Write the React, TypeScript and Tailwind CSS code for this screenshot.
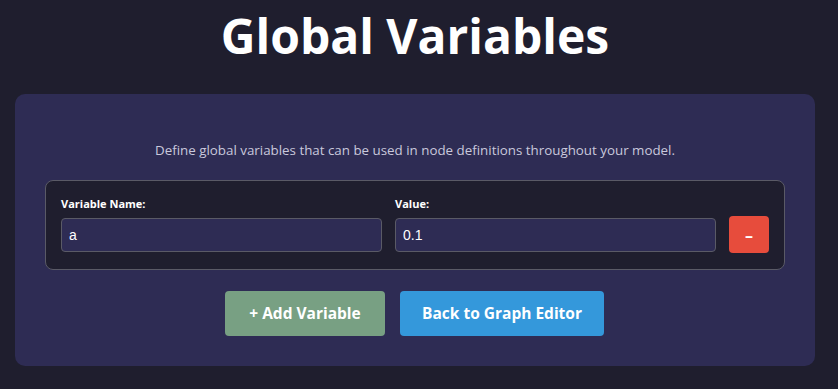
export default function App() {
  return (
    <div className="min-h-[389px] bg-[#1f1e2e] px-[15px] font-['Open_Sans',sans-serif]">
      <div className="w-[800px]">
        <h1 className="pt-[6px] text-center text-[48px] font-bold leading-[60px] text-white">Global Variables</h1>
        <div className="mt-[28px] rounded-[10px] bg-[#2e2c54] px-[30px] pb-[30px] pt-[30px]">
          <p className="mt-[17px] text-center text-[13.35px] leading-[18px] text-[#c9c8dc]">
            Define global variables that can be used in node definitions throughout your model.
          </p>
          <div className="mt-[21px] flex items-end gap-[13px] rounded-[8px] border border-[#5a5a66] bg-[#1f1e2e] px-[15px] pb-[17px] pt-[15px]">
            <label className="flex w-[321px] flex-col">
              <span className="mb-[6px] text-[11px] font-bold leading-[16px] text-white">Variable Name:</span>
              <input
                defaultValue="a"
                className="h-[34px] rounded-[4px] border border-[#5a5a66] bg-[#2e2c54] px-[7px] font-['Liberation_Sans',sans-serif] text-[14px] text-white outline-none"
              />
            </label>
            <label className="flex w-[321px] flex-col">
              <span className="mb-[6px] text-[11px] font-bold leading-[16px] text-white">Value:</span>
              <input
                defaultValue="0.1"
                className="h-[34px] rounded-[4px] border border-[#5a5a66] bg-[#2e2c54] px-[7px] font-['Liberation_Sans',sans-serif] text-[14px] text-white outline-none"
              />
            </label>
            <button className="mb-[-1px] flex h-[37px] w-[40px] items-center justify-center rounded-[4px] bg-[#e74c3c] text-[16px] font-bold text-white">
              –
            </button>
          </div>
          <div className="mt-[21px] mr-[1px] flex justify-center gap-[15px]">
            <button className="h-[45px] w-[160px] rounded-[4px] bg-[#78a083] text-[15.5px] font-bold text-white">+ Add Variable</button>
            <button className="h-[45px] w-[204px] rounded-[4px] bg-[#3498db] text-[15.5px] font-bold text-white">Back to Graph Editor</button>
          </div>
        </div>
      </div>
    </div>
  );
}
